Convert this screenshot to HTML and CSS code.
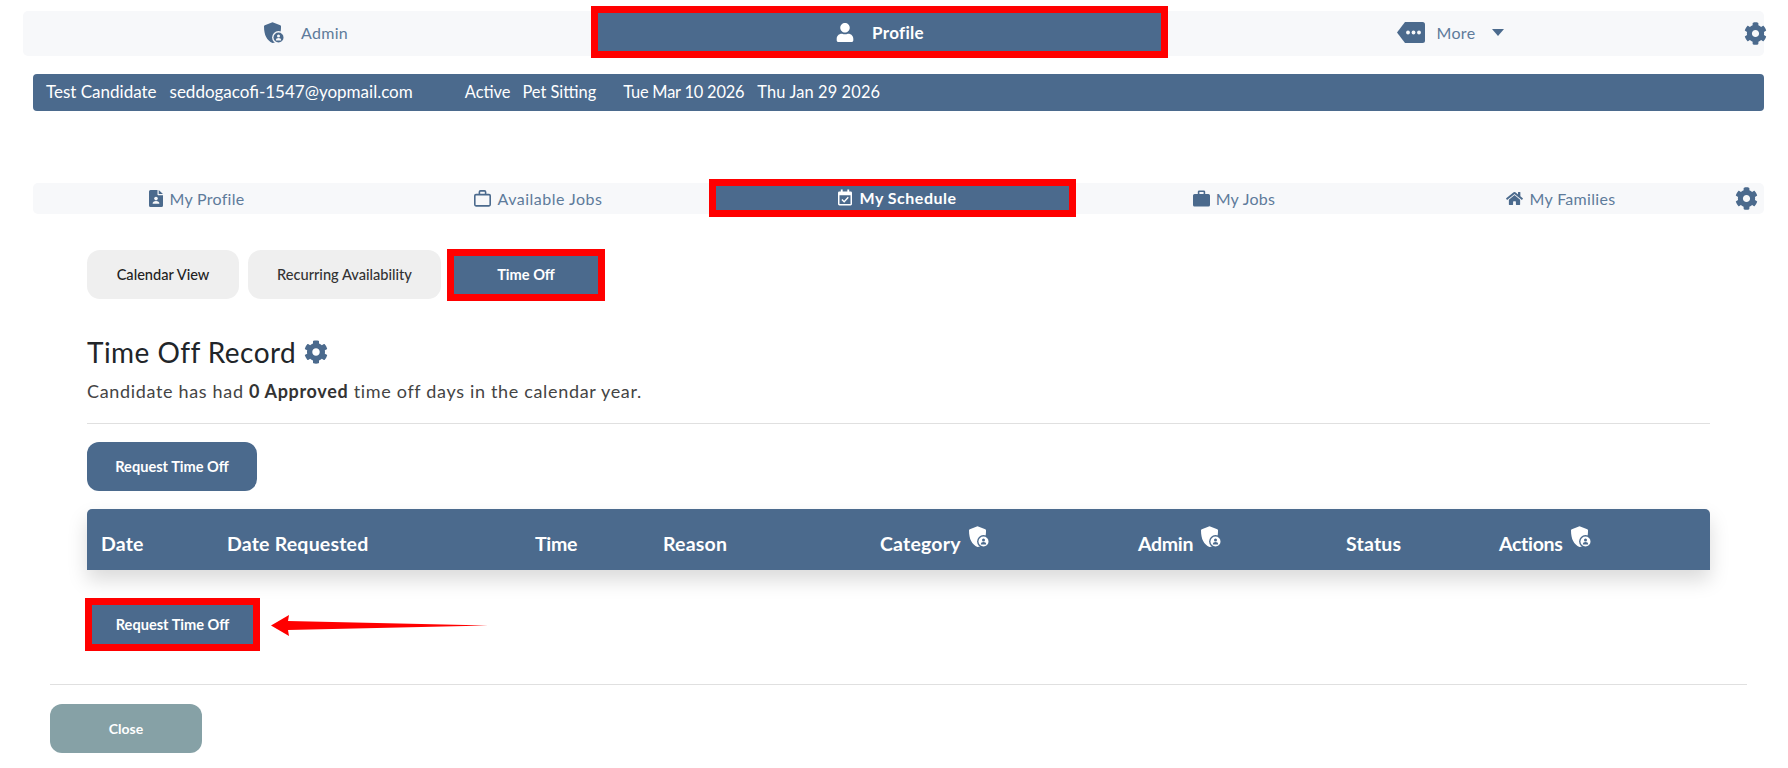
FILE: index.html
```html
<!DOCTYPE html>
<html lang="en">
<head>
<meta charset="utf-8">
<title>Time Off Record</title>
<link rel="stylesheet" href="styles.css">
</head>
<body>
<svg class="defs" aria-hidden="true">
  <symbol id="gear" viewBox="0 0 512 512"><path d="M487.4 315.7l-42.6-24.6c4.3-23.2 4.3-47 0-70.2l42.6-24.6c4.9-2.8 7.1-8.6 5.5-14-11.1-35.6-30-67.8-54.7-94.6-3.8-4.1-10-5.1-14.8-2.3L380.8 110c-17.9-15.4-38.5-27.3-60.8-35.1V25.8c0-5.6-3.9-10.5-9.4-11.7-36.7-8.2-74.3-7.8-109.2 0-5.5 1.2-9.4 6.1-9.4 11.7V75c-22.2 7.9-42.8 19.8-60.8 35.1L88.7 85.5c-4.9-2.8-11-1.9-14.8 2.3-24.7 26.7-43.6 58.9-54.7 94.6-1.7 5.4.6 11.2 5.5 14L67.3 221c-4.3 23.2-4.3 47 0 70.2l-42.6 24.6c-4.9 2.8-7.1 8.6-5.5 14 11.1 35.6 30 67.8 54.7 94.6 3.8 4.1 10 5.1 14.8 2.3l42.6-24.6c17.9 15.4 38.5 27.3 60.8 35.1v49.2c0 5.6 3.9 10.5 9.4 11.7 36.7 8.2 74.3 7.8 109.2 0 5.5-1.2 9.4-6.1 9.4-11.7v-49.2c22.2-7.9 42.8-19.8 60.8-35.1l42.6 24.6c4.9 2.8 11 1.9 14.8-2.3 24.7-26.7 43.6-58.9 54.7-94.6 1.5-5.5-.7-11.3-5.6-14.1zM256 336c-44.1 0-80-35.9-80-80s35.9-80 80-80 80 35.9 80 80-35.9 80-80 80z"/></symbol>
  <symbol id="user" viewBox="0 0 448 512"><path d="M224 256c70.7 0 128-57.3 128-128S294.7 0 224 0 96 57.3 96 128s57.3 128 128 128zm89.6 32h-16.7c-22.2 10.2-46.9 16-72.9 16s-50.6-5.8-72.9-16h-16.7C60.2 288 0 348.2 0 422.4V464c0 26.5 21.5 48 48 48h352c26.5 0 48-21.5 48-48v-41.6c0-74.2-60.2-134.4-134.4-134.4z"/></symbol>
  <symbol id="home" viewBox="0 0 576 512"><path d="M280.37 148.26L96 300.11V464a16 16 0 0 0 16 16l112.06-.29a16 16 0 0 0 15.92-16V368a16 16 0 0 1 16-16h64a16 16 0 0 1 16 16v95.64a16 16 0 0 0 16 16.05L464 480a16 16 0 0 0 16-16V300L295.67 148.26a12.19 12.19 0 0 0-15.3 0zM571.6 251.47L488 182.56V44.05a12 12 0 0 0-12-12h-56a12 12 0 0 0-12 12v72.61L318.47 43a48 48 0 0 0-61 0L4.34 251.47a12 12 0 0 0-1.6 16.9l25.5 31A12 12 0 0 0 45.15 301l235.22-193.74a12.19 12.19 0 0 1 15.3 0L530.9 301a12 12 0 0 0 16.9-1.6l25.5-31a12 12 0 0 0-1.7-16.93z"/></symbol>
  <symbol id="shield" viewBox="0 0 20 21">
    <path d="M8.5 0.3 L16.3 3.2 Q17 3.5 17 4.3 C17 7 16.9 9.5 16.2 11.5 L15 19 Q11 21 8.5 21 C3 18.6 0 13.4 0 4.3 Q0 3.5 0.8 3.2 Z"/>
    <circle class="cut" cx="14.5" cy="15.5" r="6.4"/>
    <circle cx="14.5" cy="15.5" r="5"/>
    <circle class="cut" cx="14.5" cy="14" r="1.5"/>
    <path class="cut" d="M11.8 18.6 c0-1.8 1-2.6 2.7-2.6 s2.7 0.8 2.7 2.6 z"/>
  </symbol>
  <symbol id="tag" viewBox="0 0 28 21">
    <path d="M8 0 H25.5 Q28 0 28 2.5 V18.5 Q28 21 25.5 21 H8 L0 10.5 Z"/>
    <circle class="cut" cx="11" cy="10.5" r="1.9"/><circle class="cut" cx="16.5" cy="10.5" r="1.9"/><circle class="cut" cx="22" cy="10.5" r="1.9"/>
  </symbol>
  <symbol id="file" viewBox="0 0 14 17">
    <path d="M1.5 0 H8.5 V4.5 Q8.5 5.2 9.2 5.2 H14 V15.5 Q14 17 12.5 17 H1.5 Q0 17 0 15.5 V1.5 Q0 0 1.5 0 Z M9.7 0 L14 4.1 H9.7 Z"/>
    <circle class="cut" cx="7" cy="8.6" r="1.8"/>
    <path class="cut" d="M3.6 13.8 c0-2 1.3-2.8 3.4-2.8 s3.4 0.8 3.4 2.8 z"/>
  </symbol>
  <symbol id="case-line" viewBox="0 0 17 17">
    <path fill="none" stroke="currentColor" stroke-width="1.6" d="M2 4.6 H15 Q16.2 4.6 16.2 5.8 V14.6 Q16.2 15.9 15 15.9 H2 Q0.8 15.9 0.8 14.6 V5.8 Q0.8 4.6 2 4.6 Z M5.4 4.6 V2 Q5.4 0.9 6.5 0.9 H10.5 Q11.6 0.9 11.6 2 V4.6"/>
  </symbol>
  <symbol id="case" viewBox="0 0 17 17">
    <path d="M1.6 4 H4.8 V1.8 Q4.8 0.4 6.2 0.4 H10.8 Q12.2 0.4 12.2 1.8 V4 H15.4 Q17 4 17 5.6 V15 Q17 16.6 15.4 16.6 H1.6 Q0 16.6 0 15 V5.6 Q0 4 1.6 4 Z M6.4 4 H10.6 V2 H6.4 Z" fill-rule="evenodd"/>
  </symbol>
  <symbol id="cal" viewBox="0 0 15 17">
    <path fill-rule="evenodd" d="M1.5 2 H3 V0 H5 V2 H10 V0 H12 V2 H13.5 Q15 2 15 3.5 V15.5 Q15 17 13.5 17 H1.5 Q0 17 0 15.5 V3.5 Q0 2 1.5 2 Z M1.6 6 V15.4 H13.4 V6 Z"/>
    <path fill="none" stroke="currentColor" stroke-width="1.5" d="M4.2 10.6 L6.6 13 L11 8.3"/>
  </symbol>
</svg>

<div class="page">
  <nav class="topnav">
    <a class="toptab toptab-admin"><svg class="ic ic-shield"><use href="#shield"/></svg><span>Admin</span></a>
    <a class="toptab is-active"><svg class="ic ic-user"><use href="#user"/></svg><span>Profile</span></a>
    <a class="toptab"><svg class="ic ic-tag"><use href="#tag"/></svg><span>More</span><i class="caret"></i></a>
    <svg class="ic ic-gear"><use href="#gear"/></svg>
  </nav>

  <div class="infobar">
    <span>Test Candidate</span>
    <span class="gap-s">seddogacofi-1547@yopmail.com</span>
    <span class="gap-l small">Active</span>
    <span class="gap-p small">Pet Sitting</span>
    <span class="gap-m small date-a">Tue Mar 10 2026</span>
    <span class="gap-s small date-b">Thu Jan 29 2026</span>
  </div>

  <nav class="subnav">
    <a class="subtab"><svg class="ic ic-sm"><use href="#file"/></svg><span>My Profile</span></a>
    <a class="subtab subtab-jobs"><svg class="ic ic-sm ic-wide"><use href="#case-line"/></svg><span>Available Jobs</span></a>
    <a class="subtab is-active"><svg class="ic ic-sm"><use href="#cal"/></svg><span>My Schedule</span></a>
    <a class="subtab"><svg class="ic ic-sm ic-wide"><use href="#case"/></svg><span>My Jobs</span></a>
    <a class="subtab"><svg class="ic ic-home"><use href="#home"/></svg><span>My Families</span></a>
    <svg class="ic ic-gear sub-gear"><use href="#gear"/></svg>
  </nav>

  <main class="content">
    <div class="pills">
      <button class="pill pill-cal">Calendar View</button>
      <button class="pill pill-rec">Recurring Availability</button>
      <button class="pill pill-on">Time Off</button>
    </div>

    <h2 class="title">Time Off Record <svg class="ic ic-gear title-gear"><use href="#gear"/></svg></h2>
    <p class="lead">Candidate has had <strong>0 Approved</strong> time off days in the calendar year.</p>
    <hr class="rule">
    <button class="btn btn-top">Request Time Off</button>

    <div class="thead">
      <div class="th">Date</div>
      <div class="th">Date Requested</div>
      <div class="th th-tight">Time</div>
      <div class="th">Reason</div>
      <div class="th">Category<svg class="ic th-shield"><use href="#shield"/></svg></div>
      <div class="th th-tight">Admin<svg class="ic th-shield"><use href="#shield"/></svg></div>
      <div class="th">Status</div>
      <div class="th th-tight">Actions<svg class="ic th-shield"><use href="#shield"/></svg></div>
    </div>

    <div class="action-row">
      <button class="btn btn-marked">Request Time Off</button>
      <svg class="arrow" viewBox="0 0 217 22"><path d="M0 10.5 L18 0 L17 6 L217 10.5 L17 15 L18 21 Z"/></svg>
    </div>
  </main>

  <footer class="foot">
    <hr class="rule">
    <button class="close">Close</button>
  </footer>
</div>
</body>
</html>
```
FILE: styles.css
```css
* { box-sizing: border-box; }
html, body { margin: 0; padding: 0; background: #fff; }
body { font-family: "Lato", "Noto Sans", sans-serif; color: #444; overflow: hidden; }
.defs { display: none; }
a { text-decoration: none; }
button { font-family: inherit; border: 0; cursor: pointer; padding: 0; }

.page { display: flex; flex-direction: column; width: 1788px; height: 768px; overflow: hidden; --cut: #f7f8fa; }

.ic { fill: currentColor; color: #4b6a8d; flex: none; display: block; }
.cut { fill: var(--cut); }

/* top nav */
.topnav {
  margin: 11px 24px 0 23px; height: 45px;
  display: grid; grid-template-columns: 575px 563px 579px 24px;
  align-items: start; background: #f7f8fa; border-radius: 5px;
}
.toptab {
  height: 45px; display: flex; align-items: center; justify-content: center;
  font-size: 16px; color: #5e7b9b; letter-spacing: .3px; padding-bottom: 2px;
}
.toptab-admin { padding-right: 9px; }
.toptab.is-active {
  height: 38px; margin-top: 2px; padding-bottom: 0; background: #4b6a8d; color: #fff; font-weight: 700; font-size: 17px;
  outline: 7px solid #f00; --cut: #4b6a8d;
}
.toptab.is-active .ic { color: #fff; }
.ic-shield { width: 20px; height: 21px; margin-right: 17px; }
.ic-user { width: 20px; height: 19px; margin-right: 17px; }
.ic-tag { width: 28px; height: 21px; margin-right: 12px; }
.caret { width: 0; height: 0; margin-left: 17px; border: 6px solid transparent; border-top: 7px solid #4b6a8d; border-bottom: 0; }
.ic-gear { width: 23px; height: 23px; }
.topnav > .ic-gear { margin-top: 11px; justify-self: end; margin-right: -3px; }

/* info bar */
.infobar {
  margin: 18px 24px 0 33px; height: 37px; padding: 0 13px;
  display: flex; align-items: baseline;
  background: #4b6a8d; border-radius: 4px; color: #fff; font-size: 17px; line-height: 36px;
}
.small { font-size: 16.4px; }
.date-a { letter-spacing: -.2px; }
.date-b { letter-spacing: .13px; }
.gap-s { margin-left: 13px; }
.gap-p { margin-left: 12px; }
.gap-m { margin-left: 27px; }
.gap-l { margin-left: 52px; }

/* sub nav */
.subnav {
  margin: 72px 24px 0 33px; height: 31px;
  display: grid; grid-template-columns: 328px 355px 353px 330px 322px 43px;
  align-items: start; background: #f7f8fa; border-radius: 5px;
}
.subtab {
  height: 31px; display: flex; align-items: center; justify-content: center; gap: 6px;
  font-size: 16px; color: #5e7b9b; letter-spacing: .3px; padding-bottom: 1px;
}
.subtab-jobs { letter-spacing: .5px; }
.subtab.is-active {
  height: 24px; margin-top: 3px; padding: 0 0 1px 10px; gap: 7px; background: #4b6a8d; color: #fff; font-weight: 700; letter-spacing: .5px;
  outline: 7px solid #f00; --cut: #4b6a8d;
}
.subtab.is-active .ic { color: #fff; }
.ic-sm { width: 14px; height: 17px; }
.ic-wide { width: 17px; }
.ic-home { width: 19px; height: 15px; }
.sub-gear { margin-top: 4px; justify-self: center; margin-left: 8px; }

/* content */
.content { margin: 36px 78px 0 87px; display: flex; flex-direction: column; align-items: flex-start; }
.pills { display: flex; align-items: center; height: 49px; }
.pill { height: 49px; border-radius: 13px; background: #efefef; color: #222; font-size: 14.6px; font-weight: 500; }
.pill-cal { width: 152px; }
.pill-rec { width: 193px; margin-left: 9px; color: #333; }
.pill-on { width: 144px; height: 38px; margin-left: 13px; border-radius: 0; background: #4b6a8d; color: #fff; font-weight: 700; outline: 7px solid #f00; }

.title {
  margin: 36px 0 0; height: 34px; display: flex; align-items: center;
  font-size: 28px; line-height: 34px; font-weight: 400; color: #212529; letter-spacing: .45px;
}
.title-gear { width: 24px; height: 24px; margin-left: 8px; }
.lead { margin: 10px 0 0; font-size: 18px; line-height: 24px; color: #444; letter-spacing: .67px; }
.lead strong { color: #333; }

.rule { width: 100%; height: 1px; margin: 0; border: 0; background: #e0e0e0; }
.content > .rule { margin-top: 20px; }

.btn { color: #fff; background: #4b6a8d; font-size: 14.6px; font-weight: 700; }
.btn-top { width: 170px; height: 49px; margin-top: 18px; border-radius: 12px; }

.thead {
  width: 100%; height: 61px; margin-top: 18px; padding: 9px 0 0 14px;
  display: grid; grid-template-columns: 126px 308px 128px 217px 258px 208px 153px 1fr;
  align-items: center; background: #4b6a8d; border-radius: 5px 5px 0 0;
  box-shadow: 0 10px 20px rgba(0, 0, 0, .15); --cut: #4b6a8d;
}
.th { display: flex; align-items: flex-start; color: #fff; font-size: 19.5px; letter-spacing: .2px; line-height: 24px; font-weight: 700; }
.th-tight { letter-spacing: -.3px; }
.th-shield { width: 20px; height: 21px; margin: -6px 0 0 8px; color: #fff; }

.action-row { display: flex; align-items: center; margin: 35px 0 0 5px; }
.btn-marked { width: 161px; height: 39px; outline: 7px solid #f00; }
.arrow { width: 217px; height: 22px; margin: 2px 0 0 18px; fill: #f00; }

.foot { margin: 40px 41px 0 50px; display: flex; flex-direction: column; align-items: flex-start; }
.close { width: 152px; height: 49px; margin-top: 19px; border-radius: 12px; background: #86a1a6; color: #fff; font-size: 14px; font-weight: 700; }
```
